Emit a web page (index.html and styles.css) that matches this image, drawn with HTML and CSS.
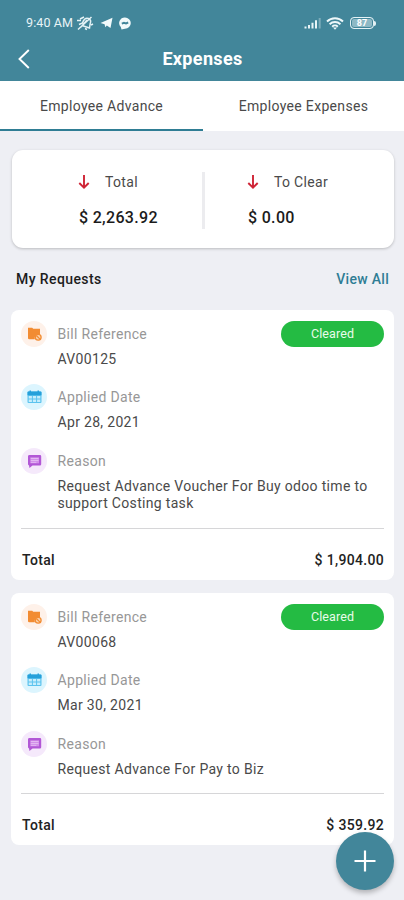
FILE: index.html
```
<!DOCTYPE html>
<html lang="en">
<head>
<meta charset="utf-8">
<meta name="viewport" content="width=device-width, initial-scale=1">
<title>Expenses</title>
<link rel="stylesheet" href="styles.css">
</head>
<body>
<svg class="defs" width="0" height="0" aria-hidden="true">
  <symbol id="bill" viewBox="0 0 26 26">
    <path fill="#f28c32" d="M7 6.700h4.200l1 1H19v5.800a3.900 3.900 0 0 0-5.200 4.700H8.200A1.200 1.200 0 0 1 7 17z"/>
    <circle cx="17.200" cy="16.300" r="2.900" fill="#fbd5b1" stroke="#f28c32" stroke-width="1.300"/>
    <path d="M15.300 14.500l3.700 3.600" stroke="#f28c32" stroke-width="1.300"/>
  </symbol>
  <symbol id="date" viewBox="0 0 26 26">
    <rect x="6.500" y="7.500" width="14" height="11.500" rx="1" fill="#5cc3ee"/>
    <path d="M6.500 11.300V8.500a1 1 0 0 1 1-1h12a1 1 0 0 1 1 1v2.800zM8.500 6.500h1.500v2H8.500zM16.500 6.500H18v2h-1.500z" fill="#25a0da"/>
    <path fill="#c8eefc" d="M7.700 12h3.200v2.500H7.700zM11.900 12h3.200v2.500h-3.200zM16.100 12h3.200v2.500h-3.200zM7.700 15.400h3.200v2.500H7.700zM11.900 15.400h3.200v2.500h-3.200zM16.100 15.400h3.200v2.500h-3.200z"/>
  </symbol>
  <symbol id="reason" viewBox="0 0 26 26">
    <path fill="#b258d6" d="M8 7h11a1.200 1.200 0 0 1 1.200 1.200v8a1.200 1.200 0 0 1-1.200 1.200h-7.500L8.500 19.900 8 17.400l-1-1V8.200A1.200 1.200 0 0 1 8 7z"/>
    <path fill="#d28fe9" d="M9.300 9.300h8.700v6H9.300z"/>
    <path d="M9.800 10.500h7.700M9.800 12.500h7.700M9.800 14.400h5.500" stroke="#e3b8f2" stroke-width="1"/>
  </symbol>
  <symbol id="down" viewBox="0 0 12 16">
    <path d="M6 1v12.500M1.300 9L6 13.700 10.700 9" fill="none" stroke="#cf2436" stroke-width="1.900"/>
  </symbol>
</svg>

<header class="header">
  <div class="status">
    <span class="clock">9:40 AM</span>
    <svg class="mute" width="18" height="16" viewBox="0 0 18 16" fill="none" stroke="#e4f2f5" stroke-width="1.500">
      <path d="M3 9.500L6.500 8c1-3.500 3-5.500 6-4.500 2.500 1 2.500 3 1.700 5L13.500 13l-3-1-4.500-1.500M9 13.500l2 1M2 14.500L15.500 2M1 5.500h4M4 4l4-2M15 10l2-1M5 12l6-7"/>
    </svg>
    <svg class="plane" width="13" height="12" viewBox="0 0 13 12" fill="#f2fafb"><path d="M.5 6L12.500.8 10.500 11 6.800 8.600 5.300 10.300 4.600 7.300z"/></svg>
    <svg class="chat" width="12" height="13" viewBox="0 0 12 13"><path fill="#f2fafb" d="M6 .5a5.700 5.500 0 0 1 0 11.200L2.500 12.500 1.800 10A5.700 5.600 0 0 1 6 .5z"/><path d="M2.800 6.700L5 5.800l2 .6 2.200-.9" fill="none" stroke="#42869a" stroke-width="1.900"/></svg>
    <svg class="signal" width="18" height="12" viewBox="0 0 18 12" stroke="#e8f4f7" stroke-width="2"><path d="M1.500 9.500V11.500M5 8v3.500M8.500 5.800v5.700M12 3.300v8.200"/><path d="M15.700 1v10.500" opacity=".35"/></svg>
    <svg class="wifi" width="18" height="13" viewBox="0 0 18 13" fill="none" stroke="#eef8fa" stroke-width="1.900"><path d="M1 4.500a11.500 11.500 0 0 1 16 0M3.600 7.200a7.800 7.800 0 0 1 10.800 0M6.200 9.700a4 4 0 0 1 5.600 0"/><path d="M7 10.500h4L9 12.700z" fill="#eef8fa" stroke="none"/></svg>
    <span class="battery">87</span><span class="nub"></span>
  </div>
  <div class="titlebar">
    <svg class="back" width="12" height="20" viewBox="0 0 12 20"><path d="M10.800 1L1.500 10l9.300 9" fill="none" stroke="#fff" stroke-width="1.900"/></svg>
    <h1>Expenses</h1>
  </div>
</header>

<nav class="tabs">
  <a class="tab active">Employee Advance</a>
  <a class="tab">Employee Expenses</a>
</nav>

<main>
  <section class="summary">
    <div class="stat">
      <div class="stat-label"><svg width="12" height="16"><use href="#down"/></svg>Total</div>
      <div class="amount">$ 2,263.92</div>
    </div>
    <div class="stat second">
      <div class="stat-label"><svg width="12" height="16"><use href="#down"/></svg>To Clear</div>
      <div class="amount">$ 0.00</div>
    </div>
  </section>

  <div class="section-head"><h2>My Requests</h2><a>View All</a></div>

  <article class="card">
    <div class="row">
      <span class="icon bill"><svg width="26" height="26"><use href="#bill"/></svg></span>
      <div class="label">Bill Reference</div><span class="badge">Cleared</span>
      <div class="value">AV00125</div>
    </div>
    <div class="row">
      <span class="icon date"><svg width="26" height="26"><use href="#date"/></svg></span>
      <div class="label">Applied Date</div>
      <div class="value">Apr 28, 2021</div>
    </div>
    <div class="row">
      <span class="icon reason"><svg width="26" height="26"><use href="#reason"/></svg></span>
      <div class="label">Reason</div>
      <div class="value">Request Advance Voucher For Buy odoo time to<br>support Costing task</div>
    </div>
    <footer class="total"><span>Total</span><span>$ 1,904.00</span></footer>
  </article>

  <article class="card short">
    <div class="row">
      <span class="icon bill"><svg width="26" height="26"><use href="#bill"/></svg></span>
      <div class="label">Bill Reference</div><span class="badge">Cleared</span>
      <div class="value">AV00068</div>
    </div>
    <div class="row">
      <span class="icon date"><svg width="26" height="26"><use href="#date"/></svg></span>
      <div class="label">Applied Date</div>
      <div class="value">Mar 30, 2021</div>
    </div>
    <div class="row">
      <span class="icon reason"><svg width="26" height="26"><use href="#reason"/></svg></span>
      <div class="label">Reason</div>
      <div class="value">Request Advance For Pay to Biz</div>
    </div>
    <footer class="total"><span>Total</span><span>$ 359.92</span></footer>
  </article>
</main>

<button class="fab" aria-label="Add"><svg width="22" height="22" viewBox="0 0 22 22"><path d="M11 .5v21M.5 11h21" stroke="#fff" stroke-width="2.200"/></svg></button>
</body>
</html>
```
FILE: styles.css
```
* { box-sizing: border-box; }
body {
  margin: 0;
  height: 900px;
  overflow: hidden;
  background: #eeeff4;
  color: #4a4a4a;
  font: 14px/17.5px Roboto, sans-serif;
  letter-spacing: .32px;
}
svg { display: block; flex: none; }
.defs { position: absolute; }
h1, h2 { margin: 0; }

.header { height: 81px; background: #42869a; color: #fff; }
.status { display: flex; align-items: center; height: 46px; padding: 0 28px 0 26px; }
.clock { width: 50px; font-size: 12.5px; letter-spacing: .1px; color: #e8f4f7; white-space: nowrap; }
.plane { margin-left: 6px; }
.chat { margin-left: 6px; }
.signal { margin-left: auto; }
.wifi { margin-left: 4px; }
.battery {
  width: 24px; height: 12px; margin-left: 6px;
  border: 1.500px solid #e4f2f5; border-radius: 4px;
  box-shadow: inset 0 0 0 1px #42869a;
  background: #8db9c5;
  font-size: 9px; font-weight: 700; line-height: 10px; letter-spacing: 0;
  text-align: center; color: #fff;
}
.nub { width: 2px; height: 5px; background: #e4f2f5; border-radius: 0 2px 2px 0; }
.titlebar { display: grid; grid-template-columns: 36px 1fr 36px; align-items: center; height: 24px; }
.back { margin-left: 18px; }
h1 { font-size: 18px; line-height: 24px; font-weight: 700; letter-spacing: .35px; text-align: center; padding: 1px 0 0 1px; }

.tabs { display: flex; height: 50px; background: #fff; }
.tab { flex: 1; padding-top: 17px; text-align: center; }
.tab.active { flex: 0 0 203px; border-bottom: 2px solid #2f7d94; }

main { padding: 19px 10px 0 11px; }
.summary {
  display: flex; height: 98px; margin: 0 0 0 1px; padding-top: 22px;
  background: #fff; border-radius: 11px;
  box-shadow: 0 1px 3px rgba(0, 0, 0, .22);
}
.stat { flex: none; width: 193px; padding-left: 66px; height: 57px; border-right: 3px solid #ececef; }
.stat.second { flex: 1; padding-left: 42px; border: 0; }
.stat-label { display: flex; align-items: center; gap: 15px; height: 20px; padding-top: 1px; }
.stat-label svg { margin-top: -2px; }
.amount { margin: 16px 0 0 1px; font-size: 16px; line-height: 20px; font-weight: 500; color: #1b1b1b; }

.section-head { display: flex; justify-content: space-between; margin: 22px 5px 0; height: 40px; line-height: 18px; color: #2f7d94; font-weight: 500; letter-spacing: .3px; }
h2 { font: inherit; color: #1d1d1d; letter-spacing: .4px; }

.card { height: 270px; margin-bottom: 13px; padding: 12px 10px 0; background: #fff; border-radius: 8px; }
.card.short { height: 252px; }
.row { display: grid; grid-template-columns: 26px 1fr auto; column-gap: 10.500px; grid-template-rows: 24px auto; row-gap: 4.500px; margin-bottom: 17.500px; align-items: center; }
.icon { width: 26px; height: 26px; margin: -1px 0 0; border-radius: 50%; }
.icon.bill { background: #fef1e9; }
.icon.date { background: #dcf5fe; }
.icon.reason { background: #f5e9fb; }
.label { padding-top: 1px; color: #979797; }
.value { grid-column: 2 / 4; white-space: nowrap; }
.badge { width: 103px; height: 26px; border-radius: 13px; background: #24bb43; color: #e9fbea; font-size: 12.500px; line-height: 26px; letter-spacing: .1px; text-align: center; }
.row:nth-of-type(3) { margin-bottom: 15px; }
.total { display: flex; justify-content: space-between; padding: 23px 0 0 1px; border-top: 1.500px solid #d6d6d8; font-weight: 500; color: #222; }

.fab {
  position: absolute; left: 336px; top: 832px; width: 58px; height: 58px;
  display: grid; place-items: center; padding: 0; border: 0; border-radius: 50%;
  background: #42869a; box-shadow: 0 3px 5px rgba(0, 0, 0, .25);
}
```
